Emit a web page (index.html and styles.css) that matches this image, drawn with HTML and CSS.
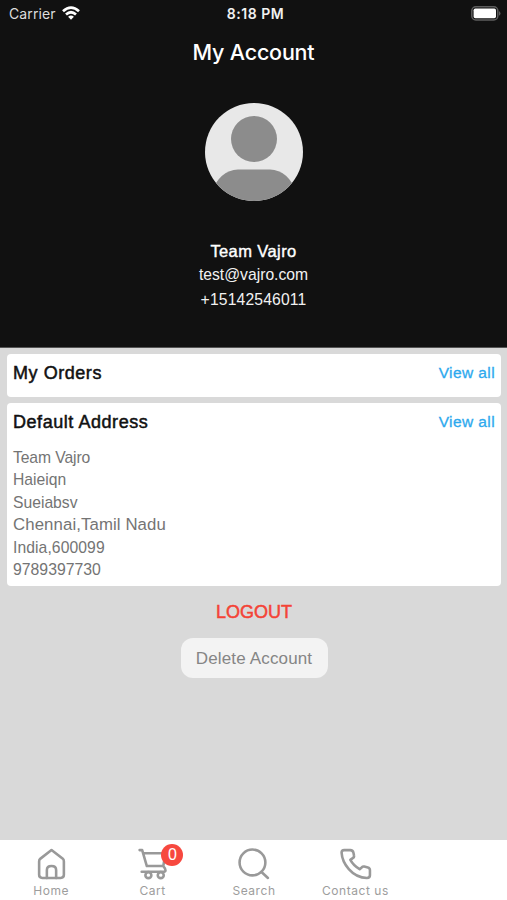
FILE: index.html
```html
<!DOCTYPE html>
<html lang="en">
<head>
<meta charset="utf-8">
<title>My Account</title>
<link rel="stylesheet" href="styles.css">
</head>
<body>
<header class="profile">
  <div class="status">
    <div class="carrier"><span>Carrier</span>
      <svg width="18" height="14" viewBox="0 0 18 14" fill="none" stroke="#fff" stroke-width="2.7"><path d="M1 5.3Q9 -2 17 5.3M4 8.5Q9 4 14 8.5"/><path d="M9 13.700 6.100 10.700Q9 8.500 11.900 10.700Z" fill="#fff" stroke="none"/></svg>
    </div>
    <div class="clock">8:18 PM</div>
    <div class="battery"><svg width="30" height="15" viewBox="0 0 30 15"><rect x=".8" y=".8" width="26" height="13.2" rx="4" fill="#111" stroke="#5d5d5d" stroke-width="1.5"/><rect x="2.600" y="2.600" width="22.400" height="9.600" rx="1.700" fill="#fff"/><path d="M28 5q3 2.400 0 4.800z" fill="#5d5d5d"/></svg></div>
  </div>
  <h1>My Account</h1>
  <svg class="avatar" viewBox="0 0 98 98"><defs><clipPath id="round"><circle cx="49" cy="49" r="49"/></clipPath></defs><g clip-path="url(#round)"><path fill="#e8e8e8" d="M0 0h98v98H0z"/><circle cx="49" cy="36" r="23" fill="#8c8c8c"/><path d="M6 98V90Q15 67 33 66.500H65Q83 67 92 90V98Z" fill="#8c8c8c"/></g></svg>
  <div class="name">Team Vajro</div>
  <div class="email">test@vajro.com</div>
  <div class="phone">+15142546011</div>
</header>
<main>
  <section class="card orders">
    <div class="card-head"><h2>My Orders</h2><a>View all</a></div>
  </section>
  <section class="card address">
    <div class="card-head"><h2>Default Address</h2><a>View all</a></div>
    <div class="lines">
      <div class="person">Team Vajro</div><div>Haieiqn</div><div>Sueiabsv</div><div class="city">Chennai,Tamil Nadu</div><div class="country">India,600099</div><div class="number">9789397730</div>
    </div>
  </section>
  <div class="logout">LOGOUT</div>
  <button class="delete">Delete Account</button>
</main>
<nav>
  <div class="tab"><svg viewBox="0 0 32 32"><path d="M16 3 5 11.500Q4 12.300 4 14V27Q4 30 7 30H25Q28 30 28 27V14Q28 12.300 27 11.500Z"/><path d="M11.500 30V22.500Q11.500 18.500 16 18.500T20.500 22.500V30"/></svg><span>Home</span></div>
  <div class="tab"><svg viewBox="0 0 32 32"><path d="M3.500 3H6L10.500 18.500H26.500L28.500 6H7M26.500 18.500Q31 24 26 24H5.500"/><circle cx="12" cy="27.300" r="2.900"/><circle cx="24" cy="27.300" r="2.900"/></svg><b class="badge">0</b><span>Cart</span></div>
  <div class="tab"><svg viewBox="0 0 32 32"><circle cx="15" cy="15" r="12.500"/><path d="m23.500 24 6.500 6"/></svg><span>Search</span></div>
  <div class="tab"><svg viewBox="0 0 32 32"><path d="M5 3H11Q13.500 3 14 5.500L14.500 8Q15 10 13 11L11 12.500Q14 18 20 21.500L22 19.800Q23 18.700 24.500 19L28 19.800Q30 20.300 30 22.500V27.500Q30 30 27 30Q17 30 9.500 21.500Q3 14 2.500 5.500Q2.500 3 5 3Z"/></svg><span>Contact us</span></div>
  <div class="tab"></div>
</nav>
</body>
</html>
```
FILE: styles.css
```css
* { box-sizing: border-box; }
body {
  margin: 0;
  height: 900px;
  display: flex;
  flex-direction: column;
  background: #d9d9d9;
  font-family: "Liberation Sans", Arial, sans-serif;
}
h1, h2 { margin: 0; font-weight: 400; }
.profile {
  height: 348px;
  background: #111;
  color: #f1f1f1;
  display: flex;
  flex-direction: column;
  align-items: center;
  border-bottom: 1px solid #555;
}
.status {
  width: 100%;
  height: 28px;
  padding: 0 6px 0 9px;
  display: grid;
  grid-template-columns: 1fr auto 1fr;
  align-items: center;
  font: 14px/28px Inter, sans-serif;
}
.carrier { display: flex; align-items: center; gap: 6px; letter-spacing: .1px; color: #ddd; }
.carrier svg { margin-top: -2px; }
.clock { font-weight: 600; font-size: 14px; letter-spacing: .5px; margin-right: -1px; }
.battery { display: flex; justify-content: flex-end; }
.battery svg { margin-top: -2px; }
h1 {
  margin-top: 8px;
  font: 500 21.5px/32px Inter, sans-serif;
  letter-spacing: -.2px;
  color: #fff;
}
.avatar { width: 98px; height: 98px; margin-top: 35px; }
.name {
  margin-top: 38px;
  font-size: 16.5px;
  line-height: 24px;
  letter-spacing: .4px;
  color: #fff;
  -webkit-text-stroke: .4px;
}
.email, .phone { font-size: 15.7px; line-height: 24px; }
.phone { line-height: 25px; letter-spacing: .15px; }
main {
  flex: 1;
  padding: 6px 6px 0 7px;
  display: flex;
  flex-direction: column;
  align-items: center;
}
.card { width: 100%; background: #fff; border-radius: 4px; padding: 0 6px; }
.orders { height: 43px; }
.address { height: 183px; margin-top: 6px; }
.card-head { height: 39px; display: flex; align-items: center; justify-content: space-between; }
.card-head h2 { font-size: 18px; letter-spacing: .55px; color: #111; -webkit-text-stroke: .5px; }
.card-head a { font-size: 15.5px; letter-spacing: .4px; margin-top: -2px; color: #2da9ee; -webkit-text-stroke: .3px; }
.lines { padding-top: 5px; font-size: 15.7px; line-height: 22.4px; color: #747474; }
.person { letter-spacing: -.1px; }
.city { font-size: 16.8px; letter-spacing: .1px; }
.country { letter-spacing: .08px; }
.number { font-size: 15.8px; }
.logout { margin-top: 13px; font-size: 18px; line-height: 26px; color: #f44336; -webkit-text-stroke: .5px; }
.delete {
  width: 147px;
  height: 40px;
  margin-top: 13px;
  padding: 2px 0 0;
  border: 0;
  border-radius: 12px;
  background: #f3f3f3;
  color: #858585;
  font: 17px "Liberation Sans", Arial, sans-serif;
  letter-spacing: .15px;
  white-space: nowrap;
}
nav {
  height: 60px;
  background: #fff;
  display: grid;
  grid-template-columns: repeat(5, 1fr);
}
.tab {
  position: relative;
  display: flex;
  flex-direction: column;
  align-items: center;
  padding: 7px 0 0 1px;
  color: #9d9d9d;
  font: 400 12px/15px Inter, sans-serif;
  letter-spacing: .55px;
}
.tab svg {
  width: 33px;
  height: 33px;
  margin-bottom: 3px;
  fill: none;
  stroke: #999;
  stroke-width: 2.5;
  stroke-linecap: round;
  stroke-linejoin: round;
}
.badge {
  position: absolute;
  left: 60px;
  top: 4px;
  width: 22px;
  height: 22px;
  border-radius: 50%;
  background: #f7483f;
  color: #fff;
  font: 16px/22px "Liberation Sans", sans-serif;
  letter-spacing: 0;
  text-align: center;
}
```
